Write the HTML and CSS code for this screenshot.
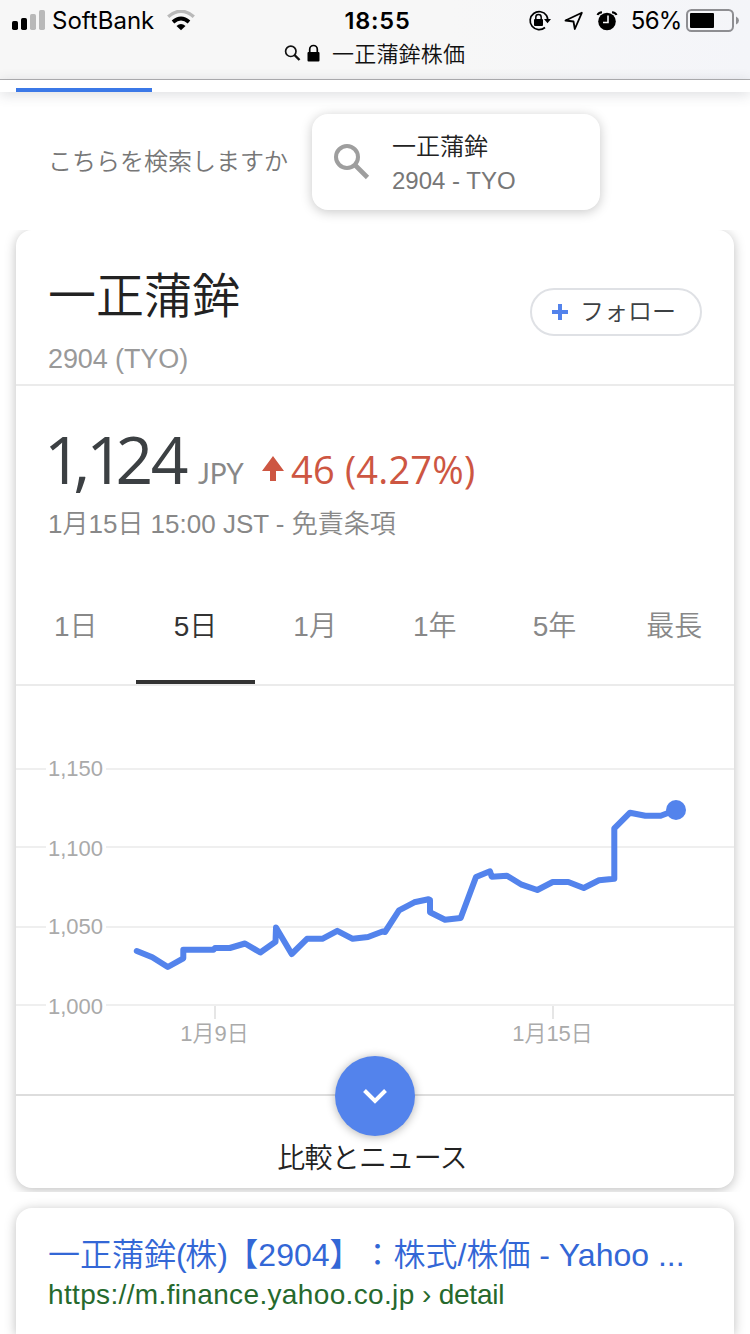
FILE: index.html
```html
<!DOCTYPE html>
<html lang="ja">
<head>
<meta charset="utf-8">
<title>一正蒲鉾株価</title>
<link rel="stylesheet" href="styles.css">
</head>
<body>
<header class="browser">
  <div class="status">
    <div class="status-left">
      <svg class="signal" width="34" height="22" viewBox="0 0 34 22"><rect x="0" y="11" width="6" height="9" rx="1.7"/><rect x="9" y="8" width="6" height="12" rx="1.7"/><g fill="#b9b9b9"><rect x="18" y="4" width="6" height="16" rx="1.7"/><rect x="27" y="0" width="6" height="20" rx="1.7"/></g></svg>
      <span class="carrier">SoftBank</span>
      <svg class="wifi" width="28" height="22" viewBox="0 0 28 22"><path d="M1.200 6.800Q14-4.300 26.800 6.800" fill="none" stroke="#b9b9b9" stroke-width="3.4"/><path d="M6 12Q14 4.800 22 12" fill="none" stroke="#000" stroke-width="3.8"/><path d="M9.500 16Q14 12 18.500 16L14 20.300Z"/></svg>
    </div>
    <div class="clock">18:55</div>
    <div class="status-right">
      <svg width="24" height="22" viewBox="0 0 24 22"><path d="M18.500 5.500A9 9 0 1 0 17 17.500M18.500 5.500Q20 8 19.500 10.500" fill="none" stroke="#000" stroke-width="1.700"/><path d="M16 9H23L19.500 13.300Z"/><rect x="6" y="9" width="9" height="7" rx="1"/><path d="M7.800 10V7.300a2.700 2.700 0 0 1 5.400 0V10" fill="none" stroke="#000" stroke-width="1.500"/></svg>
      <svg width="20" height="22" viewBox="0 0 20 22"><path d="M1.500 10.500L17.800 2.800L10.800 19L9.500 11.500Z" fill="none" stroke="#000" stroke-width="1.800" stroke-linejoin="round"/></svg>
      <svg width="22" height="22" viewBox="0 0 22 22"><circle cx="11" cy="11.500" r="8.800"/><path d="M12 5.500V12.500H7" fill="none" stroke="#f6f6f8" stroke-width="1.600"/><path d="M1.500 5Q2.500 2.500 6 2.200M20.500 5Q19.500 2.500 16 2.200" fill="none" stroke="#000" stroke-width="2"/></svg>
      <span class="percent">56%</span>
      <svg width="54" height="24" viewBox="0 0 54 24"><rect x="1" y="1" width="46" height="21" rx="4.500" fill="none" stroke="#8e8e92" stroke-width="2"/><rect x="4" y="4" width="24" height="15" rx="1"/><path d="M50 7.500Q53 9 53 11.500T50 15.500Z" fill="#8e8e92"/></svg>
    </div>
  </div>
  <div class="address">
    <svg width="17" height="18" viewBox="0 0 17 18"><circle cx="6.800" cy="7.300" r="5.200" fill="none" stroke="#111" stroke-width="1.700"/><path d="M10.500 11L15.500 16" stroke="#111" stroke-width="2.400"/></svg>
    <svg class="lock" width="13" height="18" viewBox="0 0 13 18"><rect x="0.500" y="8" width="12" height="9.500" rx="1"/><path d="M2.700 9V5.300a3.800 3.800 0 0 1 7.600 0V9" fill="none" stroke="#000" stroke-width="1.700"/></svg>
    <span class="query">一正蒲鉾株価</span>
  </div>
</header>
<nav class="strip"><div class="strip-active"></div></nav>
<section class="hint">
  <span class="hint-text">こちらを検索しますか</span>
  <div class="suggest">
    <svg width="36" height="36" viewBox="0 0 36 36"><circle cx="13" cy="13" r="11" fill="none" stroke="#9e9e9e" stroke-width="4"/><path d="M20.500 20.500L33.500 33.500" stroke="#9e9e9e" stroke-width="4.600"/></svg>
    <div class="suggest-body"><div class="suggest-name">一正蒲鉾</div><div class="suggest-code">2904 - TYO</div></div>
  </div>
</section>
<div class="card-wrap">
<main class="card">
  <section class="head">
    <div><h1 class="name">一正蒲鉾</h1><div class="code">2904 (TYO)</div></div>
    <div class="follow"><svg width="16" height="16" viewBox="0 0 16 16"><path d="M8 0V16M0 8H16" stroke="#5383ec" stroke-width="4"/></svg><span class="follow-label">フォロー</span></div>
  </section>
  <section class="quote">
    <div class="price-row">
      <span class="price"><span class="one">1</span><span class="comma">,</span><span class="one">1</span><span class="two">2</span>4</span>
      <span class="currency">JPY</span>
      <svg class="arrow" width="22" height="28" viewBox="0 0 22 28"><path d="M11 0L22 15H14V25H8V15H0Z" fill="#cd5642"/></svg>
      <span class="change">46 (4.27%)</span>
    </div>
    <div class="time">1月15日 15:00 JST - 免責条項</div>
  </section>
  <nav class="ranges"><span>1日</span><span class="selected">5日</span><span>1月</span><span>1年</span><span>5年</span><span>最長</span></nav>
  <svg class="chart" width="718" height="408" viewBox="16 686 718 408">
    <g stroke="#efefef" stroke-width="2"><path d="M16 769H46M106 769H734M16 847H46M106 847H734M16 927H46M106 927H734M16 1005H46M106 1005H734"/><path d="M215 1006V1019M553 1006V1019" stroke="#e6e6e6"/></g>
    <g class="axis"><text x="48" y="776">1,150</text><text x="48" y="856">1,100</text><text x="48" y="934">1,050</text><text x="48" y="1014">1,000</text></g>
    <g class="axis dates"><text x="214.500" y="1041">1月9日</text><text x="552.500" y="1041">1月15日</text></g>
    <path d="M136.800 951L152.300 957.300L167.800 967L183.300 958.300V949.700H213.500L215 948H229.800L245 943.500L260.300 952.500L275.500 941.800L276 927.500L291.700 954L307 938.800H322.300L337.300 930.800L352.700 938.800L368 937L382.500 931.500L385 932L399 910.300L414.300 902.300L428.500 899.300L430 900V912.300L445 919.700L460.700 918L476 877L490 871.300L491.700 876.700L507 875.700L521.700 884.700L537.300 890L552.700 882H568.300L583.700 888L599 880.300L614.300 878.700V828.300L630 812.700L645.300 815.700H660.700L676 810" fill="none" stroke="#5383ec" stroke-width="6" stroke-linejoin="round" stroke-linecap="round"/>
    <circle cx="676" cy="810" r="10" fill="#5383ec"/>
  </svg>
  <footer class="more"><div class="fab"><svg width="24" height="16" viewBox="0 0 24 16"><path d="M1.500 2.500L12 13L22.500 2.500" fill="none" stroke="#fff" stroke-width="4"/></svg></div><span class="more-label">比較とニュース</span></footer>
</main>
</div>
<article class="card result">
  <div class="result-title">一正蒲鉾<span class="paren">(</span>株<span class="paren">)</span>【2904】：株式/株価 - Yahoo ...</div>
  <div class="result-url">https://m.finance.yahoo.co.jp<span class="crumb"> › detail</span></div>
</article>
</body>
</html>
```
FILE: styles.css
```css
* { box-sizing: border-box; }
body {
  margin: 0; width: 750px; height: 1334px; overflow: hidden; background: #fff;
  font-family: "Liberation Sans", "Noto Sans CJK JP", sans-serif; font-weight: 350;
  white-space: nowrap; display: flex; flex-direction: column;
}
svg { display: block; flex: none; }
h1 { margin: 0; font-weight: 350; }
.browser { flex: none; height: 80px; background: linear-gradient(90deg, #f7f7f7 60%, #f4f5f9); border-bottom: 1px solid #b0b0b2; }
.status { height: 40px; display: grid; grid-template-columns: 1fr 90px 1fr; align-items: center; font-family: Inter, sans-serif; color: #000; padding-top: 1px; }
.status-left { display: flex; align-items: center; padding-left: 12px; }
.signal { margin-top: 0; }
.carrier { font-size: 24px; font-weight: 400; margin-left: 6px; width: 103px; }
.wifi { margin-left: 12px; }
.clock { font-size: 23.5px; font-weight: 600; text-align: center; letter-spacing: 0.8px; padding-left: 5px; }
.status-right { display: flex; align-items: center; justify-content: flex-end; gap: 12px; padding-right: 10px; }
.percent { font-size: 24px; font-weight: 400; letter-spacing: -0.8px; margin: 0 -7.500px 0 1px; }
.address { height: 26px; padding-left: 284px; display: flex; align-items: center; font: 350 22px "Noto Sans CJK JP", sans-serif; color: #111; }
.lock { margin: 0 12px 0 6px; }
.query { letter-spacing: 0.2px; padding-bottom: 2px; }
.strip { flex: none; height: 12px; background: #fff; padding-left: 16px; display: flex; align-items: flex-end; box-shadow: 0 2px 14px rgba(60,64,80,.2); }
.strip-active { width: 136px; height: 4px; background: #3b78e7; }
.hint { flex: none; height: 138px; padding: 2px 0 0 48px; display: flex; align-items: center; font-size: 24px; }
.hint-text { width: 264px; color: #777; padding-bottom: 6px; }
.suggest { width: 288px; height: 96px; border-radius: 16px; background: #fff; box-shadow: 0 2px 12px rgba(0,0,0,.22); padding-left: 22px; display: flex; align-items: center; gap: 22px; }
.suggest-body { padding-top: 4px; }
.suggest-name { color: #222; line-height: 34px; }
.suggest-code { color: #777; line-height: 34px; }
.card-wrap { flex: none; height: 962px; padding: 0 16px; overflow: hidden; }
.card { background: #fff; border-radius: 16px; box-shadow: 0 2px 12px rgba(0,0,0,.26); }
.card-wrap .card { height: 958px; }
.head { height: 156px; border-bottom: 2px solid #ebebeb; padding: 32px 32px 0; display: flex; justify-content: space-between; }
.name { font-size: 48px; line-height: 70px; color: #222; }
.code { font-size: 27px; line-height: 30px; margin-top: 12px; color: #999; letter-spacing: -0.1px; }
.follow { width: 172px; height: 48px; margin-top: 26px; border: 2px solid #dfe1e5; border-radius: 24px; display: flex; align-items: center; padding-left: 20px; gap: 12px; font-size: 24px; color: #3c4043; }
.follow-label { padding-bottom: 5px; }
.quote { height: 182px; padding: 32px 32px 0; }
.price-row { display: flex; align-items: baseline; height: 80px; line-height: 80px; font-family: "Open Sans", sans-serif; }
.price { font-size: 66px; font-weight: 500; color: #3c4043; width: 154px; margin-left: -4px; }
.one { letter-spacing: -8.500px; }
.comma { letter-spacing: -4px; }
.two { letter-spacing: -2.500px; }
.currency { font-family: Lato, sans-serif; font-size: 28px; font-weight: 400; color: #888; width: 64px; }
.change { font-size: 38px; font-weight: 500; color: #cd5642; margin-left: 7px; letter-spacing: 0.2px; }
.time { margin-top: 8px; font-size: 26px; line-height: 36px; color: #888; }
.ranges { margin-top: -4px; height: 122px; border-bottom: 2px solid #ebebeb; display: grid; grid-template-columns: repeat(6, 1fr); font-size: 28px; text-align: center; color: #888; }
.ranges span { padding-top: 18px; line-height: 90px; }
.ranges .selected { color: #333; border-bottom: 4px solid #333; }
.axis { font-size: 22px; fill: #aaa; }
.dates { text-anchor: middle; }
.more { height: 94px; border-top: 2px solid #ddd; display: flex; flex-direction: column; align-items: center; }
.fab { flex: none; width: 80px; height: 80px; margin-top: -40px; border-radius: 50%; background: #5383ec; box-shadow: 0 1px 10px rgba(0,0,0,.3); display: flex; align-items: center; justify-content: center; }
.more-label { font-size: 28px; line-height: 40px; margin: 3px 6px 0 0; letter-spacing: -0.7px; color: #222; }
.result { flex: 1; min-height: 0; margin: 16px 16px 0; border-radius: 16px 16px 0 0; padding: 28px 32px 0; }
.result-title { font-size: 32px; line-height: 38px; color: #3367d6; text-spacing-trim: space-all; }
.paren { letter-spacing: -1.5px; }
.result-url { font-size: 28px; line-height: 36px; margin-top: 3px; color: #26692d; letter-spacing: 0.35px; }
.crumb { letter-spacing: -0.25px; }
```
